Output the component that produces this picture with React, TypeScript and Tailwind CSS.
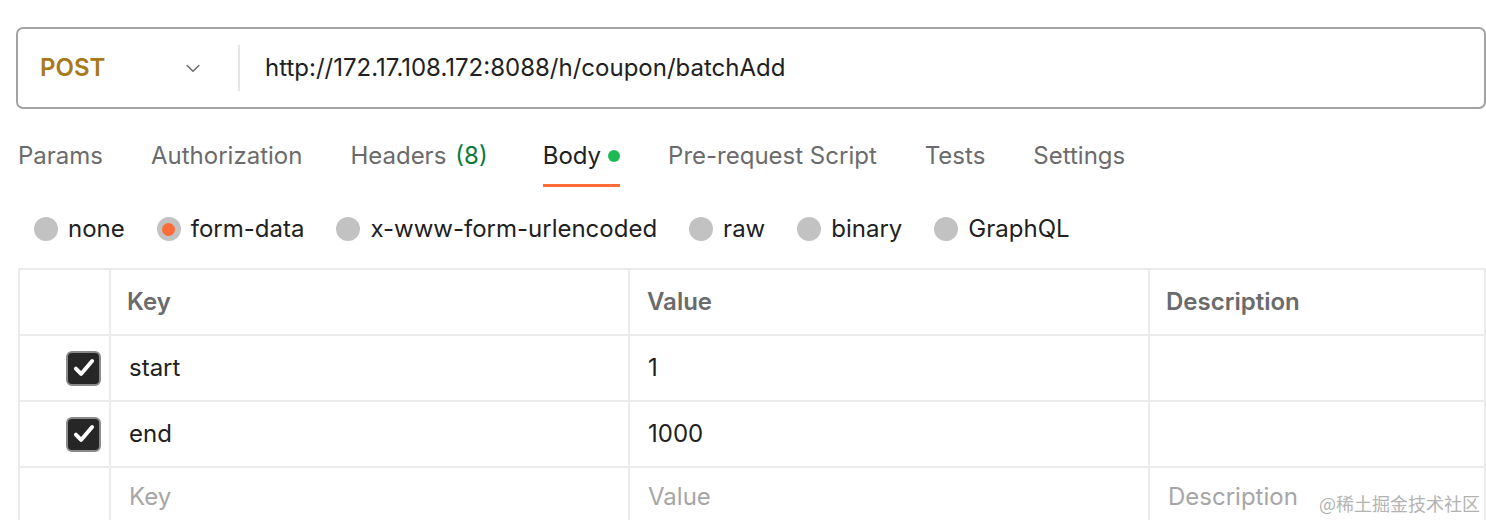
import React from 'react';

const tabs = [
  { label: 'Params' },
  { label: 'Authorization' },
  { label: 'Headers', count: '(8)' },
  { label: 'Body', active: true },
  { label: 'Pre-request Script' },
  { label: 'Tests' },
  { label: 'Settings' },
];

const bodyTypes = ['none', 'form-data', 'x-www-form-urlencoded', 'raw', 'binary', 'GraphQL'];

const rows = [
  { key: 'start', value: '1' },
  { key: 'end', value: '1000' },
];

const CheckBox = () => (
  <span className="flex h-[35px] w-[35px] items-center justify-center rounded-[6px] border-2 border-[#8a8a8a] bg-[#262626]">
    <svg width="26" height="26" viewBox="0 0 24 24" fill="none">
      <path d="M4.5 12.5l4.8 5L19.5 5.5" stroke="white" strokeWidth="3.6" strokeLinecap="round" strokeLinejoin="round" />
    </svg>
  </span>
);

const App: React.FC = () => {
  return (
    <div className="h-[520px] w-[1486px] overflow-hidden bg-white font-['Inter','Noto_Sans_CJK_SC',sans-serif] text-[24px]">
      {/* URL bar */}
      <div className="pl-4 pt-[27px]">
        <div className="flex h-[82px] items-center rounded-[7px] border-2 border-[#a3a3a3]">
          <div className="flex w-[220px] items-center pl-[22px]">
            <span className="font-semibold text-[#a8791a]">POST</span>
            <svg className="ml-[78px]" width="20" height="20" viewBox="0 0 24 24" fill="none">
              <path d="M5 9l7 7 7-7" stroke="#6b6b6b" strokeWidth="1.8" strokeLinecap="round" strokeLinejoin="round" />
            </svg>
          </div>
          <div className="h-[46px] w-[2px] bg-[#e6e6e6]" />
          <div className="pl-[25px] text-[#212121]">http://172.17.108.172:8088/h/coupon/batchAdd</div>
        </div>
      </div>

      {/* Tabs */}
      <div className="mt-[19px] flex pl-[18px]">
        {tabs.map((t) => (
          <div key={t.label} className={`flex flex-col ${t.count ? 'mr-[55px]' : 'mr-[48px]'}`}>
            <div className={`flex h-[56px] items-center ${t.active ? 'text-[#212121]' : 'text-[#6b6b6b]'}`}>
              <span>{t.label}</span>
              {t.count && <span className="ml-[9px] text-[#0b7a3b]">{t.count}</span>}
              {t.active && <span className="ml-[7px] h-[12px] w-[12px] rounded-full bg-[#1db954]" />}
            </div>
            <div className={`h-[3px] ${t.active ? 'bg-[#ff6c37]' : 'bg-transparent'}`} />
          </div>
        ))}
      </div>

      {/* Body types */}
      <div className="mt-[14px] flex h-[56px] items-center pl-[34px] text-[#212121]">
        {bodyTypes.map((b) => (
          <div key={b} className="mr-[32px] flex items-center">
            <span className="flex h-[24px] w-[24px] items-center justify-center rounded-full bg-[#c2c2c2]">
              {b === 'form-data' && <span className="h-[13px] w-[13px] rounded-full bg-[#ff6c37]" />}
            </span>
            <span className="ml-[10px]">{b}</span>
          </div>
        ))}
      </div>

      {/* Table */}
      <div className="ml-[18px] mt-[11px] border-l-2 border-t-2 border-[#ebebeb]">
        <div className="grid h-[66px] grid-cols-[91px_519px_520px_1fr] border-b-2 border-[#ebebeb] font-semibold text-[#6b6b6b]">
          <div className="border-r-2 border-[#ebebeb]" />
          <div className="flex items-center border-r-2 border-[#ebebeb] pl-[16px]">Key</div>
          <div className="flex items-center border-r-2 border-[#ebebeb] pl-[17px]">Value</div>
          <div className="flex items-center border-r-2 border-[#ebebeb] pl-[16px]">Description</div>
        </div>
        {rows.map((r) => (
          <div key={r.key} className="grid h-[66px] grid-cols-[91px_519px_520px_1fr] border-b-2 border-[#ebebeb] text-[#212121]">
            <div className="flex items-center justify-end border-r-2 border-[#ebebeb] pr-[8px]">
              <CheckBox />
            </div>
            <div className="flex items-center border-r-2 border-[#ebebeb] pl-[18px]">{r.key}</div>
            <div className="flex items-center border-r-2 border-[#ebebeb] pl-[18px]">{r.value}</div>
            <div className="border-r-2 border-[#ebebeb]" />
          </div>
        ))}
        <div className="grid h-[66px] grid-cols-[91px_519px_520px_1fr] text-[#a6a6a6]">
          <div className="border-r-2 border-[#ebebeb]" />
          <div className="flex items-center border-r-2 border-[#ebebeb] pb-[8px] pl-[18px]">Key</div>
          <div className="flex items-center border-r-2 border-[#ebebeb] pb-[8px] pl-[18px]">Value</div>
          <div className="flex items-center justify-between border-r-2 border-[#ebebeb] pb-[8px] pl-[18px] pr-[4px]">
            <span>Description</span>
            <span className="mt-[12px] font-['Noto_Sans_CJK_SC',sans-serif] text-[18px] text-[#b3b3b3]">@稀土掘金技术社区</span>
          </div>
        </div>
      </div>
    </div>
  );
};

export default App;
